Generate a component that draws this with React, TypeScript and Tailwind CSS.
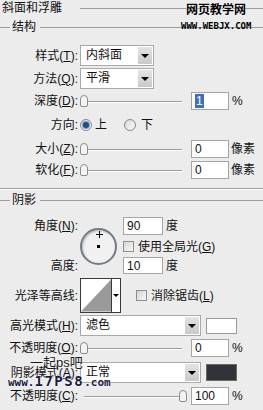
import React from "react";

const FONT = "font-['Liberation_Sans','Noto_Sans_CJK_SC',sans-serif]";

function Label({ children }: { children: React.ReactNode }) {
  return <div className="w-[78px] shrink-0 whitespace-nowrap text-right">{children}</div>;
}

function U({ children }: { children: React.ReactNode }) {
  return <span className="underline underline-offset-[1px]">{children}</span>;
}

function Arrow() {
  return <div className="h-0 w-0 border-l-[4px] border-r-[4px] border-t-[4px] border-l-transparent border-r-transparent border-t-black" />;
}

function Select({ value, wide }: { value: string; wide?: boolean }) {
  return (
    <div className={wide ? "ml-[2px] flex h-[21px] w-[121px] border border-[#a9a9a9] bg-white" : "ml-[2px] flex h-[21px] w-[74px] border border-[#a9a9a9] bg-white"}>
      <div className="flex-1 pl-[5px] leading-[19px]">{value}</div>
      <div className="m-[1px] flex w-[14px] items-center justify-center bg-gradient-to-b from-[#e4e4e4] to-[#c9c9c9]">
        <Arrow />
      </div>
    </div>
  );
}

function Field({ value, sel }: { value: string; sel?: boolean }) {
  return (
    <div className="flex h-[18px] w-[38px] items-center border border-[#a5a5a5] bg-white pl-[3px]">
      {sel ? <span className="bg-[#3d6fc4] px-[1px] leading-[14px] text-white">{value}</span> : <span className="leading-[14px]">{value}</span>}
    </div>
  );
}

function Slider({ end }: { end?: boolean }) {
  return (
    <div className="relative ml-[2px] h-[14px] w-[106px] shrink-0">
      <div className="absolute left-[4px] right-[4px] top-[7px] h-px bg-[#9c9c9c]" />
      <div className="absolute left-[4px] right-[4px] top-[8px] h-px bg-white" />
      <div className={end ? "absolute left-[99px] top-[1px] h-[12px] w-[8px] rounded-t-[4px] rounded-b-[2px] border border-[#8c8c8c] bg-[#f3f3f3]" : "absolute left-0 top-[1px] h-[12px] w-[8px] rounded-t-[4px] rounded-b-[2px] border border-[#8c8c8c] bg-[#f3f3f3]"} />
    </div>
  );
}

function Check() {
  return <div className="h-[11px] w-[11px] shrink-0 border border-[#8e8e8e] bg-gradient-to-br from-[#d6d6d6] to-[#f7f7f7]" />;
}

function Radio({ on }: { on?: boolean }) {
  return (
    <div className="flex h-[12px] w-[12px] shrink-0 items-center justify-center rounded-full border border-[#7f8a96] bg-gradient-to-br from-[#d8d8d8] to-[#fafafa]">
      {on && <div className="h-[6px] w-[6px] rounded-full bg-[#1f4e80] ring-1 ring-[#7fa6cc]" />}
    </div>
  );
}

function Legend({ text }: { text: string }) {
  return (
    <div className="flex h-[16px] items-center">
      <div className="h-px w-[10px] bg-[#9d9d9d]" />
      <div className="ml-[2px] w-[28px] leading-[16px]">{text}</div>
      <div className="h-px flex-1 bg-[#9d9d9d]" />
    </div>
  );
}

export default function App() {
  return (
    <div className={`relative h-[410px] w-[263px] overflow-hidden bg-[#ececec] text-[12px] text-[#111] ${FONT}`}>
      <div className="flex h-[16px] items-center">
        <div className="ml-[2px] leading-[16px]">斜面和浮雕</div>
        <div className="ml-[18px] h-px flex-1 bg-[#9d9d9d]" />
      </div>

      <div className="mt-[3px]">
        <Legend text="结构" />
      </div>

      <div className="mt-[10px] flex h-[21px] items-center">
        <Label>样式(<U>T</U>):</Label>
        <Select value="内斜面" />
      </div>
      <div className="mt-[2px] flex h-[21px] items-center">
        <Label>方法(<U>Q</U>):</Label>
        <Select value="平滑" />
      </div>

      <div className="mt-[3px] flex h-[18px] items-center">
        <Label>深度(<U>D</U>):</Label>
        <Slider />
        <div className="ml-[5px]"><Field value="1" sel /></div>
        <div className="ml-[3px]">%</div>
      </div>

      <div className="mt-[7px] flex h-[16px] items-center">
        <Label>方向:</Label>
        <div className="ml-[2px]"><Radio on /></div>
        <div className="ml-[3px]">上</div>
        <div className="ml-[17px]"><Radio /></div>
        <div className="ml-[5px]">下</div>
      </div>

      <div className="mt-[7px] flex h-[18px] items-center">
        <Label>大小(<U>Z</U>):</Label>
        <Slider />
        <div className="ml-[5px]"><Field value="0" /></div>
        <div className="ml-[2px]">像素</div>
      </div>
      <div className="mt-[3px] flex h-[18px] items-center">
        <Label>软化(<U>F</U>):</Label>
        <Slider />
        <div className="ml-[5px]"><Field value="0" /></div>
        <div className="ml-[2px]">像素</div>
      </div>

      <div className="mt-[9px] h-px bg-[#9d9d9d]" />
      <div className="h-px bg-white" />

      <div className="mt-[2px]">
        <Legend text="阴影" />
      </div>

      <div className="mt-[9px] flex">
        <div className="w-[78px] shrink-0 whitespace-nowrap text-right">
          <div className="h-[18px] leading-[18px]">角度(<U>N</U>):</div>
          <div className="mt-[22px] h-[18px] leading-[18px]">高度:</div>
        </div>
        <div className="relative ml-[2px] mt-[11px] h-[37px] w-[37px] rounded-full border-2 border-[#737b84] bg-[#f1f1f1] shadow-[inset_1px_1px_2px_rgba(0,0,0,0.25)]">
          <div className="absolute left-[14px] top-[4px] h-px w-[7px] bg-black" />
          <div className="absolute left-[17px] top-[1px] h-[7px] w-px bg-black" />
          <div className="absolute left-[15px] top-[15px] h-[3px] w-[3px] bg-black" />
        </div>
        <div className="ml-[6px]">
          <div className="flex h-[18px] items-center">
            <div className="flex h-[18px] w-[40px] items-center border border-[#a5a5a5] bg-white pl-[3px]">90</div>
            <div className="ml-[3px]">度</div>
          </div>
          <div className="mt-[6px] flex h-[11px] items-center">
            <Check />
            <div className="ml-[4px] whitespace-nowrap">使用全局光(<U>G</U>)</div>
          </div>
          <div className="mt-[5px] flex h-[17px] items-center">
            <div className="flex h-[17px] w-[40px] items-center border border-[#a5a5a5] bg-white pl-[3px]">10</div>
            <div className="ml-[3px]">度</div>
          </div>
        </div>
      </div>

      <div className="mt-[3px] flex h-[35px] items-center">
        <div className="w-[78px] shrink-0 text-right">光泽等高线:</div>
        <div className="ml-[2px] flex h-[35px] w-[41px] border border-[#3a3a3a] bg-white">
          <svg width="31" height="33" viewBox="0 0 31 33" className="border-r border-[#3a3a3a]">
            <polygon points="0,33 31,0 31,33" fill="#9a9a9a" />
          </svg>
          <div className="flex flex-1 items-center justify-center">
            <div className="h-0 w-0 border-l-[3px] border-r-[3px] border-t-[3px] border-l-transparent border-r-transparent border-t-black" />
          </div>
        </div>
        <div className="ml-[15px]"><Check /></div>
        <div className="ml-[4px] whitespace-nowrap">消除锯齿(<U>L</U>)</div>
      </div>

      <div className="mt-[2px] flex h-[21px] items-center">
        <Label>高光模式(<U>H</U>):</Label>
        <Select value="滤色" wide />
        <div className="ml-[5px] h-[16px] w-[31px] border border-[#9a9a9a] bg-white" />
      </div>

      <div className="mt-[3px] flex h-[18px] items-center">
        <Label>不透明度(<U>O</U>):</Label>
        <Slider />
        <div className="ml-[5px]"><Field value="0" /></div>
        <div className="ml-[3px]">%</div>
      </div>

      <div className="mt-[5px] flex h-[21px] items-center">
        <Label>阴影模式(<U>A</U>):</Label>
        <Select value="正常" wide />
        <div className="ml-[5px] h-[17px] w-[31px] border border-[#6a6a6a] bg-[#2f3236]" />
      </div>

      <div className="mt-[3px] flex h-[19px] items-center">
        <Label>不透明度(<U>C</U>):</Label>
        <Slider end />
        <div className="ml-[5px]"><Field value="100" /></div>
        <div className="ml-[3px]">%</div>
      </div>

      <div className="absolute left-[186px] top-[4px] text-[12px] font-bold leading-[13px] text-black [text-shadow:0_0_2px_white]">网页教学网</div>
      <div className="absolute left-[181px] top-[22px] font-['DejaVu_Sans_Mono',monospace] text-[9px] font-bold leading-[9px] text-black">WWW.WEBJX.COM</div>

      <div className="absolute left-[30px] top-[356px] text-[13px] leading-[14px] text-[#1b1b1b] [text-shadow:0_0_2px_white]">一起ps吧</div>
      <div className="absolute left-[8px] top-[374px] flex items-end font-['DejaVu_Sans_Mono',monospace] font-bold leading-none text-[#1c1c3c] [text-shadow:0_0_1px_white,0_0_2px_white]">
        <span className="text-[11px]">www.</span>
        <span className="text-[14px] tracking-[1.5px]">17PS8</span>
        <span className="text-[11px]">.com</span>
      </div>
    </div>
  );
}
